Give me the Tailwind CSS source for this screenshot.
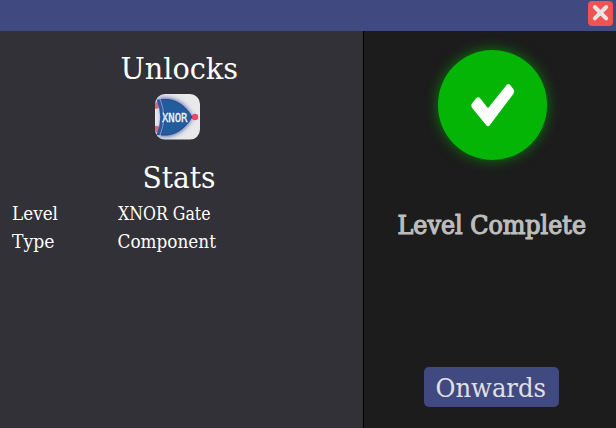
<!DOCTYPE html>
<html lang="en">
<head>
<meta charset="utf-8">
<title>Level Complete</title>
<script src="https://cdn.jsdelivr.net/npm/@tailwindcss/browser@4"></script>
</head>
<body class="flex h-[428px] w-[616px] flex-col overflow-hidden bg-[#1c1c1c] font-['Roboto_Slab','DejaVu_Serif_Condensed','DejaVu_Serif',serif] text-white">
<header class="flex h-[31px] shrink-0 justify-end bg-[#404a80] pt-px pr-[3px]">
  <button aria-label="Close" class="flex h-[25px] w-[25px] items-center justify-center rounded-[4px] bg-[#f05354]">
    <svg class="h-[25px] w-[25px]" viewBox="0 0 25 25"><path d="M6.8 6L18.2 17.4M18.2 6L6.8 17.4" stroke="#e9e5e5" stroke-width="4" stroke-linecap="round"/></svg>
  </button>
</header>
<main class="flex grow">
  <section class="flex w-[364px] flex-col border-r border-black bg-[#323137]">
    <svg class="mt-[19px] h-[36px] w-[363px] shrink-0" fill="currentColor"><text x="120.5" y="28.5" font-size="29.5" textLength="117.5" lengthAdjust="spacingAndGlyphs">Unlocks</text></svg>
    <svg class="mt-[8px] ml-[155px] h-[46px] w-[45px] shrink-0" viewBox="0 0 45 46">
      <defs>
        <clipPath id="tile"><rect width="45" height="45.6" rx="10"/></clipPath>
        <filter id="glow" x="-40%" y="-40%" width="180%" height="180%"><feGaussianBlur stdDeviation="2.6"/></filter>
      </defs>
      <g clip-path="url(#tile)">
        <rect width="45" height="46" fill="#e9e9eb"/>
        <path d="M3 4.5H12C24 5 33 14 37 23C33 32 24 41 12 42H3Q11 23 3 4.5Z" fill="#3651a5" filter="url(#glow)"/>
        <circle cx="1.5" cy="11.5" r="3.2" fill="#cf6a84"/><circle cx="1.5" cy="35" r="3.2" fill="#cf6a84"/>
        <path d="M34 23H39" stroke="#27356f" stroke-width="2"/>
        <circle cx="40" cy="23" r="3.2" fill="#f0456a"/>
        <path d="M6 5.5H12C23 6 32 14 37 23C32 32 23 40 12 41H6Q13 23 6 5.5Z" fill="#205c9e" stroke="#263f7d" stroke-width=".8"/>
        <path d="M1.5 5.5H5Q12 23 5 41H1.5Q9 23 1.5 5.5Z" fill="#2b579b"/>
        <path d="M5.2 5Q12.5 23 5.2 41" fill="none" stroke="#8791cf" stroke-width="1"/>
        <text x="7" y="27.6" font-family="'DejaVu Sans Mono',monospace" font-size="12.5" textLength="25.5" lengthAdjust="spacingAndGlyphs" fill="#f3f5fa" stroke="#f3f5fa" stroke-width=".3">XNOR</text>
      </g>
    </svg>
    <svg class="mt-[20px] h-[36px] w-[363px] shrink-0" fill="currentColor"><text x="142.5" y="27.5" font-size="29.5" textLength="73" lengthAdjust="spacingAndGlyphs">Stats</text></svg>
    <div class="mt-[4px] grid grid-cols-[118px_245px] grid-rows-[28px_28px]">
      <svg class="h-[28px] w-[118px]" fill="currentColor"><text x="12" y="20" font-size="18" textLength="46" lengthAdjust="spacingAndGlyphs">Level</text></svg>
      <svg class="h-[28px] w-[245px]" fill="currentColor"><text x="0" y="20" font-size="18" textLength="92.5" lengthAdjust="spacingAndGlyphs">XNOR Gate</text></svg>
      <svg class="h-[28px] w-[118px]" fill="currentColor"><text x="12" y="20" font-size="18" textLength="42.5" lengthAdjust="spacingAndGlyphs">Type</text></svg>
      <svg class="h-[28px] w-[245px]" fill="currentColor"><text x="-.5" y="20" font-size="18" textLength="98.5" lengthAdjust="spacingAndGlyphs">Component</text></svg>
    </div>
  </section>
  <section class="flex w-[252px] flex-col bg-[#1c1c1c]">
    <div class="mt-[19px] ml-[74px] h-[110px] w-[109px] shrink-0 rounded-full bg-[#04b506] shadow-[0_0_13px_#04b506a0]">
      <svg class="h-[110px] w-[109px]" viewBox="0 0 109 110"><path d="M33.6 54L38 48.6Q40.2 46.2 42.3 48.5L50 58.2L69 34.6Q70.5 33.2 72 34.8L76 40Q76.5 42 75.5 43.7L51.5 75.6Q50 77 48.5 75.6L34 57.7Q33 56 33.6 54Z" fill="#fff"/></svg>
    </div>
    <svg class="mt-[50px] h-[40px] w-[252px] shrink-0 text-[#bdbdbd]" fill="currentColor"><text x="33.5" y="24" font-size="25.5" stroke="currentColor" stroke-width="1.1" textLength="188.5" lengthAdjust="spacingAndGlyphs">Level Complete</text></svg>
    <button class="mt-[117px] ml-[60px] h-[40px] w-[135px] shrink-0 rounded-[5px] bg-[#404a80] text-[#e0e0e2]">
      <svg class="h-[40px] w-[135px]" fill="currentColor"><text x="11.5" y="29.5" font-size="26" textLength="110.5" lengthAdjust="spacingAndGlyphs">Onwards</text></svg>
    </button>
  </section>
</main>
</body>
</html>
